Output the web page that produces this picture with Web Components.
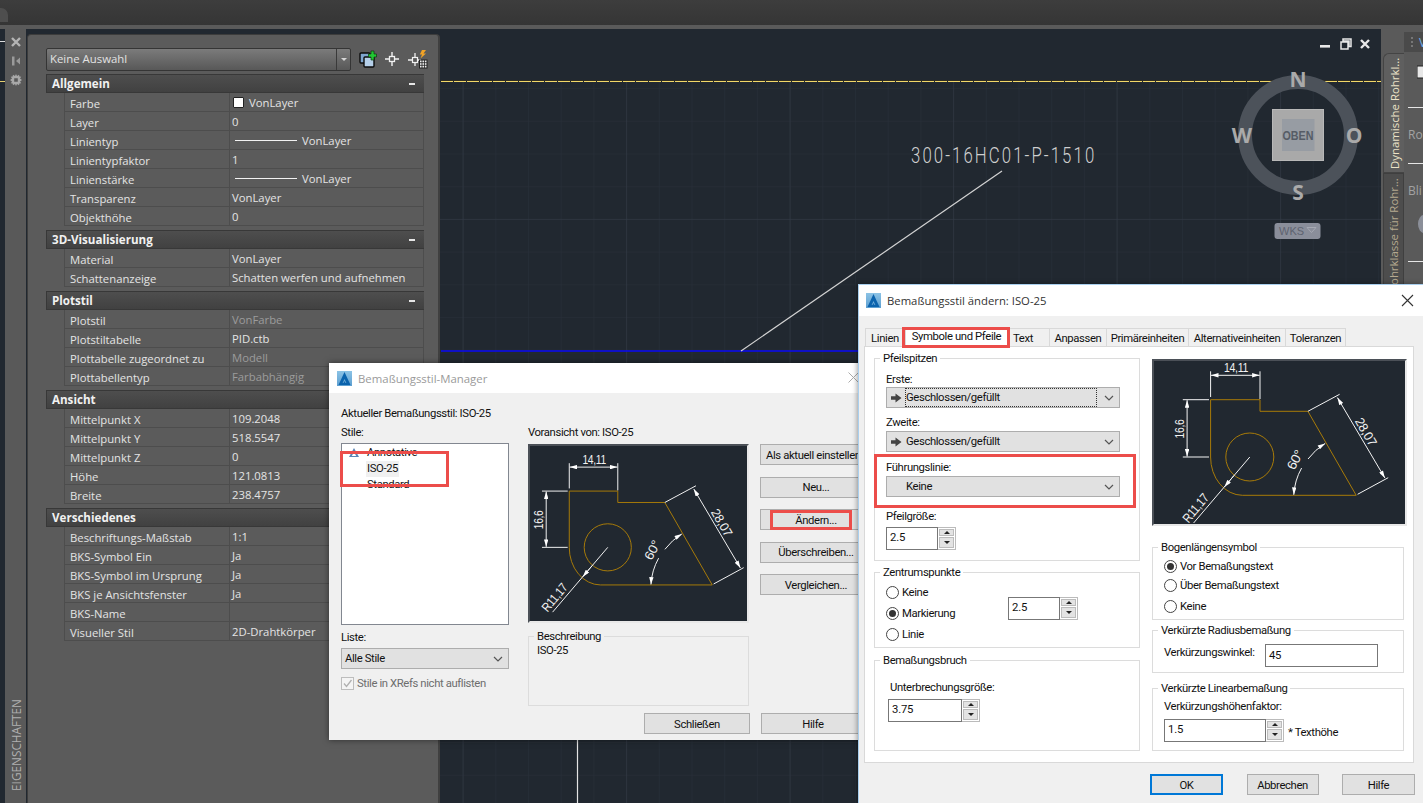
<!DOCTYPE html>
<html lang="de"><head><meta charset="utf-8"><title>Bemaßungsstil</title>
<style>html,body{margin:0;height:100%;overflow:hidden;background:#212830}</style></head>
<body>
<cad-app>
  <dock-strip slot="strip"></dock-strip>
  <prop-palette slot="palette">
    <prop-cat label="Allgemein"></prop-cat>
    <prop-row label="Farbe" value="VonLayer" swatch></prop-row>
    <prop-row label="Layer" value="0"></prop-row>
    <prop-row label="Linientyp" value="VonLayer" line></prop-row>
    <prop-row label="Linientypfaktor" value="1"></prop-row>
    <prop-row label="Linienstärke" value="VonLayer" line></prop-row>
    <prop-row label="Transparenz" value="VonLayer"></prop-row>
    <prop-row label="Objekthöhe" value="0"></prop-row>
    <prop-cat label="3D-Visualisierung"></prop-cat>
    <prop-row label="Material" value="VonLayer"></prop-row>
    <prop-row label="Schattenanzeige" value="Schatten werfen und aufnehmen"></prop-row>
    <prop-cat label="Plotstil"></prop-cat>
    <prop-row label="Plotstil" value="VonFarbe" dim></prop-row>
    <prop-row label="Plotstiltabelle" value="PID.ctb"></prop-row>
    <prop-row label="Plottabelle zugeordnet zu" value="Modell" dim></prop-row>
    <prop-row label="Plottabellentyp" value="Farbabhängig" dim></prop-row>
    <prop-cat label="Ansicht"></prop-cat>
    <prop-row label="Mittelpunkt X" value="109.2048"></prop-row>
    <prop-row label="Mittelpunkt Y" value="518.5547"></prop-row>
    <prop-row label="Mittelpunkt Z" value="0"></prop-row>
    <prop-row label="Höhe" value="121.0813"></prop-row>
    <prop-row label="Breite" value="238.4757"></prop-row>
    <prop-cat label="Verschiedenes"></prop-cat>
    <prop-row label="Beschriftungs-Maßstab" value="1:1"></prop-row>
    <prop-row label="BKS-Symbol Ein" value="Ja"></prop-row>
    <prop-row label="BKS-Symbol im Ursprung" value="Ja"></prop-row>
    <prop-row label="BKS je Ansichtsfenster" value="Ja"></prop-row>
    <prop-row label="BKS-Name" value=""></prop-row>
    <prop-row label="Visueller Stil" value="2D-Drahtkörper"></prop-row>
  </prop-palette>
  <cad-viewport slot="viewport"></cad-viewport>
  <right-dock slot="right"></right-dock>
  <style-manager slot="windows"></style-manager>
  <style-editor slot="windows"></style-editor>
</cad-app>
<script>
function def(name, css, html, init){
  customElements.define(name, class extends HTMLElement{
    constructor(){super();
      const r=this.attachShadow({mode:'open'});
      const a=n=>this.getAttribute(n);
      r.innerHTML='<style>'+css+'</style>'+(typeof html==='function'?html(a,this):html);
      if(init)init(r,this);
    }
  });
}
const UI='"Open Sans","Noto Sans",sans-serif';
const WIN='Roboto,"Liberation Sans",Arial,sans-serif';
const ACAD='<svg width="15" height="15" viewBox="0 0 15 15"><defs><linearGradient id="g" x1="0" y1="0" x2="0" y2="1"><stop offset="0" stop-color="#8cc3e6"/><stop offset="1" stop-color="#5d9fd0"/></linearGradient></defs><rect width="15" height="15" fill="url(#g)"/><path d="M7.5 1 L13.5 14 H1.5 Z M7.5 8 L5.6 12 H9.4 Z" fill="#0b63ad" fill-rule="evenodd"/><path d="M5.5 14 L7.5 10 L9.5 14Z" fill="#0b63ad"/></svg>';

/* shell */
def('cad-app',`
:host{display:grid;grid-template-rows:25px 4px 774px;width:1423px;height:803px;position:relative;overflow:hidden}
.top{background:linear-gradient(#3d3d3d,#353535);position:relative}
.top i{display:block;width:8px;height:14px;margin-top:8px;background:#4e4e4e;border-radius:0 7px 0 0;position:absolute;left:0;top:0}
.sep{background:#5a5a5a}
.work{display:flex;min-height:0;background:#212830}
.gut{width:5px;flex:none}
.gut b{display:block;height:1px;background:#ddd;margin-top:12px}
.gut u{display:block;height:1px;background:#e6cf70;margin-top:39px}
`,`<div class="top"><i></i></div><div class="sep"></div>
<div class="work"><div class="gut"><b></b><u></u></div><slot name="strip"></slot><slot name="palette"></slot><slot name="viewport"></slot><slot name="right"></slot></div>
<slot name="windows"></slot>`);

def('dock-strip',`
:host{display:flex;flex-direction:column;align-items:center;width:21px;flex:none;background:#595959;box-sizing:border-box;padding-top:7px;font:11.8px ${UI};color:#b0b0b0;height:774px}
svg{display:block;margin-bottom:7px}
.t{margin-top:auto;margin-bottom:12px;writing-mode:vertical-rl;transform:rotate(180deg);line-height:14px}
`,`<svg width="12" height="12" viewBox="0 0 12 12"><path d="M2 2 L10 10 M10 2 L2 10" stroke="#b4b4b4" stroke-width="2.4"/></svg>
<svg width="12" height="12" viewBox="0 0 12 12"><rect x="2" y="1.5" width="2.5" height="9" fill="#9a9a9a"/><path d="M10 2.5 V9.5 L6 6Z" fill="#9a9a9a"/></svg>
<svg width="12" height="12" viewBox="0 0 12 12"><path d="M6 0 L7 2 L9 .8 L9.4 2.6 L11.2 2.8 L10 4.6 L12 6 L10 7.4 L11.2 9.2 L9.4 9.4 L9 11.2 L7 10 L6 12 L5 10 L3 11.2 L2.6 9.4 L.8 9.2 L2 7.4 L0 6 L2 4.6 L.8 2.8 L2.6 2.6 L3 .8 L5 2Z M4.2 4.2 V7.8 H7.8 V4.2Z" fill="#a8a8a8" fill-rule="evenodd"/></svg>
<div class="t">EIGENSCHAFTEN</div>`);

/* properties palette */
def('prop-palette',`
:host{display:block;width:414px;flex:none;box-sizing:border-box;height:774px;background:#212830;font:11.4px ${UI}}
.p{box-sizing:border-box;height:100%;margin:5px 0 0 1px;background:#5b5b5b;border:1px solid #3c3c3c;border-bottom:0;border-right:2px solid #404040;border-radius:4px 4px 0 0;padding:13px 14px 0 18px}
.head{display:flex;align-items:center;height:23px;margin-bottom:3px;width:393px}
.combo{width:305px;height:23px;box-sizing:border-box;display:flex;border:1px solid #353535;border-radius:2px;background:linear-gradient(#7b7b7b,#585858);color:#e2e2e2}
.combo span{flex:1;padding-left:3px;line-height:20px}
.combo em{width:13px;border-left:1px solid #3a3a3a;display:flex;align-items:center;justify-content:center}
.combo em::after{content:"";border:3.5px solid transparent;border-top:3.5px solid #d6d6d6;margin-top:3px}
.ic{display:flex;margin-left:8px;gap:5px}
.ic svg{display:block}
.list{width:378px}
`,`<div class="p"><div class="head"><div class="combo"><span>Keine Auswahl</span><em></em></div>
<div class="ic">
<svg width="18" height="18" viewBox="0 0 18 18"><rect x="1" y="3" width="10" height="10" rx="1" fill="#7fa6cf" stroke="#0b0b0b" stroke-width="1.4"/><rect x="5" y="7" width="10" height="10" rx="1" fill="#b5cfe9" stroke="#0b0b0b" stroke-width="1.4"/><path d="M9.5 4 H12 V1 H15 V4 H17.5 V7 H15 V10 H12 V7 H9.5Z" fill="#22c634" stroke="#0c3b10" stroke-width=".7"/></svg>
<svg width="20" height="18" viewBox="0 0 20 18"><path d="M10 2 V6.5 M10 11.5 V16 M3 9 H7.5 M12.5 9 H17" stroke="#f2f2f2" stroke-width="1.4"/><rect x="7.5" y="6.5" width="5" height="5" fill="none" stroke="#f2f2f2" stroke-width="1.3"/></svg>
<svg width="22" height="20" style="margin-top:-1px" viewBox="0 0 22 20"><path d="M8 4 V8.5 M8 13 V17 M1 11 H5.5 M10.5 11 H14" stroke="#f2f2f2" stroke-width="1.3"/><rect x="5.5" y="8.5" width="5" height="5" fill="none" stroke="#f2f2f2" stroke-width="1.2"/><path d="M15 1 L19 1 L16.5 4.5 H19 L13.5 9.5 L15 5.5 H12.8Z" fill="#f1a326"/><rect x="12.5" y="11" width="7.5" height="8" fill="#efefef" stroke="#222"/><path d="M12.5 13.7 H20 M12.5 16.3 H20 M15 11 V19 M17.5 11 V19" stroke="#222" stroke-width=".8"/></svg>
</div></div><div class="list"><slot></slot></div></div>`);

def('prop-cat',`
:host{display:flex;justify-content:space-between;align-items:center;box-sizing:border-box;height:19px;margin-top:4px;background:linear-gradient(#4e4e4e,#414141);border:1px solid #383838;border-width:1px 0 1px 1px;padding:0 9px 0 5px;font:700 11.6px ${UI};color:#f1f1f1}
:host(:first-child){margin-top:0}
i{display:block;width:6px;height:2px;background:#e6e6e6}
`,a=>`<span>${a('label')}</span><i></i>`);

def('prop-row',`
:host{display:grid;grid-template-columns:164px 1fr;height:19px;margin-left:18px;box-sizing:border-box;border-bottom:1px solid #4d4d4d;border-left:1px solid #4d4d4d;border-right:1px solid #4d4d4d;font:11.3px/18px ${UI};color:#e4e4e4}
.l{padding-left:5px;white-space:nowrap;overflow:hidden;line-height:21px;height:18px}
.v{border-left:1px solid #4d4d4d;padding:1px 0 0 2px;box-sizing:border-box;display:flex;align-items:center;white-space:nowrap;overflow:hidden;height:18px}
:host([dim]) .v{color:#9c9c9c}
.sw{width:9px;height:9px;background:#fff;border:1px solid #222;border-radius:1px;margin:-1px 5px 0 1px}
.ln{width:62px;height:1px;background:#f2f2f2;margin:-1px 5px 0 3px}
`,(a,e)=>`<div class="l">${a('label')}</div><div class="v">${e.hasAttribute('swatch')?'<i class="sw"></i>':''}${e.hasAttribute('line')?'<i class="ln"></i>':''}<span>${a('value')}</span></div>`);

/* drawing area */
def('cad-viewport',`
:host{display:block;flex:1;min-width:0;height:774px;background:#212830}
svg{display:block}
`,`<svg width="941" height="774" viewBox="440 29 941 774" font-family='"Liberation Sans",Arial,sans-serif'>
<defs>
<pattern id="minor" x="462.6" y="55.4" width="32.7" height="32.7" patternUnits="userSpaceOnUse"><path d="M0 0 V32.7 M0 0 H32.7" stroke="#29303a" stroke-width="1"/></pattern>
<pattern id="major" x="462.6" y="55.4" width="163.5" height="163.5" patternUnits="userSpaceOnUse"><path d="M0 0 V163.5 M0 0 H163.5" stroke="#343c47" stroke-width="1"/></pattern>
</defs>
<rect x="440" y="81" width="941" height="722" fill="url(#minor)"/>
<rect x="440" y="81" width="941" height="722" fill="url(#major)"/>
<path d="M441 80.5 H1381" stroke="#2f2d22" stroke-width="1"/>
<path d="M441 81.5 H1381" stroke="#f2d868" stroke-width="1" stroke-dasharray="12 1"/>
<path d="M441 351 H880" stroke="#0808f8" stroke-width="1.6"/>
<path d="M741 351 L1002 171" stroke="#d4d4d4" stroke-width="1.2"/>
<path d="M577.5 740 V803" stroke="#e4e4e4" stroke-width="1.2"/>
<text transform="translate(911 162.5) scale(.8 1.08)" textLength="229" lengthAdjust="spacing" font-size="21" font-family='Roboto,sans-serif' font-weight="300" fill="#cfcfcf">300-16HC01-P-1510</text>
<g fill="#e8e8e8">
<rect x="1320" y="45" width="10" height="2.6"/>
<path d="M1341 42 H1348 V49 H1341Z M1343 39 H1351 V46.5 H1349 V41 H1343Z" fill="none" stroke="#e8e8e8" stroke-width="1.5"/>
<path d="M1361 40 L1369 48 M1369 40 L1361 48" stroke="#e8e8e8" stroke-width="2.4"/>
</g>
<circle cx="1298" cy="135" r="53" fill="none" stroke="#4c525a" stroke-width="14"/>
<rect x="1272.5" y="109.5" width="51" height="51" fill="#a9a9a9" stroke="#b8b8b8"/>
<rect x="1282" y="119" width="32.5" height="32" fill="#979ca3"/>
<text x="1298" y="140" text-anchor="middle" font-size="13.5" font-weight="700" textLength="31" lengthAdjust="spacingAndGlyphs" fill="#565c66">OBEN</text>
<g font-size="21" font-weight="700" fill="#aaaaaa" text-anchor="middle" font-family='"Open Sans",sans-serif'>
<text x="1298" y="87">N</text><text x="1298" y="200">S</text><text x="1242" y="142.5">W</text><text x="1354" y="142.5">O</text></g>
<rect x="1274.5" y="223" width="46" height="16" rx="3" fill="#8a8e9a"/>
<text x="1279" y="235" font-size="11" fill="#5e6370">WKS</text>
<path d="M1307 227.5 H1316 L1311.5 232.5Z" fill="none" stroke="#a6a9b3"/>
</svg>`);

def('right-dock',`
:host{display:block;width:42px;flex:none;height:774px;background:#5a5a5a;position:relative;font:12px ${UI};overflow:hidden}
.tabs{position:absolute;left:2px;top:24px;width:21px}
.tab{box-sizing:border-box;width:21px;writing-mode:vertical-rl;transform:rotate(180deg);display:flex;align-items:center;white-space:nowrap;overflow:hidden;line-height:19px;font-size:11.4px}
.a{height:120px;padding-top:3px;background:#5f5f5f;border:1px solid #444;border-left:0;border-bottom-right-radius:6px;color:#ece3c8}
.b{height:125px;padding-top:5px;background:#4d4d4d;border:1px solid #3f3f3f;color:#b5a990}
.c{position:absolute;left:23px;top:0;right:0;bottom:0;color:#a2a2a2}
.h{height:20px;margin-top:3px;background:#4a4a4a;display:flex;align-items:center;color:#6fb0e8;padding-left:7px;gap:6px}
.h u{width:2px;height:10px;border-left:2px dotted #777}
.c hr{position:absolute;left:4px;right:0;border:0;height:1px;background:#e6e6e6;margin:0}
.c span{position:absolute;left:4px}
`,`<div class="tabs"><div class="tab a">Dynamische Rohrkl...</div><div class="tab b">Rohrklasse für Rohr...</div></div>
<div class="c"><div class="h"><u></u>V</div>
<svg style="position:absolute;left:13px;top:36px" width="8" height="16"><rect x="0" y="1" width="10" height="12" fill="#e8e8e8" stroke="#222"/></svg>
<hr style="top:78px"><span style="top:97px">Ro</span><hr style="top:134px"><span style="top:153px">Bli</span>
<svg style="position:absolute;left:12px;top:186px" width="8" height="18"><ellipse cx="8" cy="9" rx="6" ry="9" fill="#8b8f99"/></svg>
<hr style="top:232px"></div>`);

/* windows primitives */
def('win-btn',`
:host{display:flex;align-items:center;justify-content:center;box-sizing:border-box;height:21px;background:#e1e1e1;border:1px solid #adadad;padding-top:1px;font:11.3px ${WIN};letter-spacing:-.38px;color:#111;white-space:nowrap}
:host([primary]){border:2px solid #0078d7}
`,'<slot></slot>');
def('win-combo',`
:host{display:flex;align-items:center;box-sizing:border-box;height:21px;background:#e1e1e1;border:1px solid #adadad;font:11.3px/16px ${WIN};letter-spacing:-.38px;color:#111;padding-left:3px;position:relative}
.a{display:block}
.t{flex:1;white-space:nowrap;padding-top:1px}
:host([focus]) .t{outline:1px dotted #333;outline-offset:0;margin-right:8px}
svg.c{flex:none;margin-right:5px}
`,(a,e)=>`${e.hasAttribute('arrow')?'<svg class="a" width="11" height="10" viewBox="0 0 11 10" style="margin:0 4px 0 1px"><path d="M0 3.2 H4.5 V.5 L10.5 5 L4.5 9.5 V6.8 H0Z" fill="#444"/></svg>':''}<span class="t"><slot></slot></span><svg class="c" width="10" height="6" viewBox="0 0 10 6"><path d="M1 1 L5 5 L9 1" fill="none" stroke="#555" stroke-width="1.2"/></svg>`);
def('win-group',`
:host{display:block;font:11.3px ${WIN};letter-spacing:-.38px;color:#111}
fieldset{box-sizing:border-box;height:100%;margin:0;padding:0;border:1px solid #dcdcdc;min-inline-size:0}
legend{padding:0 3px;margin-left:5px;line-height:15px;height:14px;white-space:nowrap}
`,a=>`<fieldset><legend>${a('label')}</legend><slot></slot></fieldset>`);
def('win-radio',`
:host{display:flex;align-items:center;height:14px;gap:3px;font:11.3px/16px ${WIN};letter-spacing:-.38px;color:#111;white-space:nowrap}
i{display:flex;align-items:center;justify-content:center;width:13px;height:13px;box-sizing:border-box;border:1px solid #444;border-radius:50%;background:#fff}
:host([checked]) i::after{content:"";width:7px;height:7px;border-radius:50%;background:#333}
`,'<i></i><span style="padding-top:1px"><slot></slot></span>');
def('win-spin',`
:host{display:flex;height:23px;font:11.3px ${WIN};letter-spacing:-.2px;color:#111}
.i{flex:1;box-sizing:border-box;border:1px solid #777;background:#fff;padding:2px 0 0 3px;line-height:16px}
.s{width:18px;flex:none;display:flex;flex-direction:column;gap:1px;box-sizing:border-box;border:1px solid #bbb;border-left:0;background:#fff;padding:1px}
.s b{flex:1;background:#e3e3e3;border:1px solid #bcbcbc;display:flex;align-items:center;justify-content:center}
.s b::after{content:"";border:3px solid transparent}
.s b:first-child::after{border-bottom:3.5px solid #222;margin-top:-3px}
.s b:last-child::after{border-top:3.5px solid #222;margin-top:3px}
`,a=>`<div class="i">${a('value')}</div><div class="s"><b></b><b></b></div>`);
def('win-edit',`
:host{display:block;box-sizing:border-box;height:23px;border:1px solid #777;background:#fff;font:11.3px/18px ${WIN};color:#111;padding:2px 0 0 3px}
`,'<slot></slot>');
def('red-box',`:host{display:block;position:absolute;z-index:5;box-sizing:border-box;border:3px solid #ec4d4a;pointer-events:none}`,'');

/* dimension preview drawing */
def('dim-preview',`
:host{display:block;background:#212830;border:2px solid #4b5057;border-right-color:#e8e8e8;border-bottom-color:#e8e8e8;box-sizing:border-box}
svg{display:block}
`,(a)=>{const ox=a('ox'),oy=a('oy');return `<svg width="100%" height="100%" viewBox="${ox} ${oy} ${a('vw')} ${a('vh')}" font-family='"Liberation Sans",Arial,sans-serif' font-size="13" fill="#f2f2f2">
<defs><marker id="ar" viewBox="0 0 10 6" refX="10" refY="3" markerWidth="8" markerHeight="4.5" markerUnits="userSpaceOnUse" orient="auto-start-reverse"><path d="M10 3 L0 0 V6Z" fill="#fff"/></marker></defs>
<g fill="none" stroke="#a87b08" stroke-width="1"><path d="M56.6 38.7 H106 V50.3 H153.9 L202.2 134.3 H88.3 A32 38 0 0 1 56.6 96 Z"/><circle cx="95.8" cy="96" r="24"/></g>
<g fill="none" stroke="#f4f4f4" stroke-width="1">
<path d="M56.6 36 V10.3 M106 38 V10.3"/><path d="M57 14.3 H105.6" marker-start="url(#ar)" marker-end="url(#ar)"/>
<path d="M55 38.7 H28.8 M55 96 H28.8"/><path d="M33.1 39.2 V95.5" marker-start="url(#ar)" marker-end="url(#ar)"/>
<path d="M153.9 50.3 L185.6 33.3 M203.6 133.3 L234.2 116.7"/><path d="M183.4 36.6 L230.9 117" marker-start="url(#ar)" marker-end="url(#ar)"/>
<path d="M139.8 133.8 A62 62 0 0 1 147.6 107" marker-start="url(#ar)"/><path d="M154 98 A62 62 0 0 1 171.2 82.4" marker-end="url(#ar)"/>
<path d="M95.8 96 L39.6 162"/><path d="M80 114.5 L70.3 126" marker-end="url(#ar)"/>
</g>
<text x="82" y="11" text-anchor="middle" textLength="24" lengthAdjust="spacingAndGlyphs">14,11</text>
<text transform="translate(30 68) rotate(-90)" text-anchor="middle" textLength="19" lengthAdjust="spacingAndGlyphs">16,6</text>
<text transform="translate(208 73) rotate(60)" text-anchor="middle" textLength="30" lengthAdjust="spacingAndGlyphs">28,07</text>
<text transform="translate(145 101) rotate(-62)" text-anchor="middle" textLength="20" lengthAdjust="spacingAndGlyphs">60°</text>
<text transform="translate(45 150) rotate(-50)" text-anchor="middle" textLength="33" lengthAdjust="spacingAndGlyphs">R11,17</text>
</svg>`});

/* window 1 */
def('style-manager',`
:host{display:block;position:absolute;left:329px;top:363px;width:546px;height:377px;background:#f0f0f0;box-shadow:0 0 6px rgba(0,0,0,.5);font:11.3px ${WIN};letter-spacing:-.38px;color:#111;overflow:hidden}
.title{height:30px;background:#fff;display:flex;align-items:center;padding-left:8px;gap:6px;font:11.4px ${UI};letter-spacing:0;color:#9a9a9a}
.title svg{flex:none}
.x{position:absolute;left:519px;top:9px}
.body{padding:13px 0 0 12px}
.cur,.lab{height:14px;line-height:16px;white-space:nowrap}
.cols{display:grid;grid-template-columns:168px 221px 104px;column-gap:19px;margin-top:5px}
.cols>:nth-child(3){margin-left:-8px}
.list{height:182px;box-sizing:border-box;border:1px solid #828790;background:#fff;margin-top:4px;padding-top:1px}
.it{display:flex;height:16px;line-height:16px;padding-left:24px;position:relative}
.it span{padding:0 1px}
.sel span{background:#f0f0f0}
.it svg{position:absolute;left:6px;top:2px}
.chk{display:flex;align-items:center;gap:3px;margin-top:8px;color:#6d6d6d;white-space:nowrap;height:13px}
.chk i{display:flex;width:13px;height:13px;box-sizing:border-box;border:1px solid #bdbdbd;background:#f4f4f4}
dim-preview{height:179px;margin-top:5px;width:221px}
.btns{display:flex;flex-direction:column;gap:11.5px;padding-top:19px}
.foot{display:flex;gap:11px;margin:7px 0 0 303px}
.desc{display:block;height:77px;margin-top:6px}
.desc div{padding-left:8px;line-height:15px}
`,`<div class="title">${ACAD}<span>Bemaßungsstil-Manager</span></div>
<svg class="x" width="11" height="11" viewBox="0 0 11 11"><path d="M.5 .5 L10.5 10.5 M10.5 .5 L.5 10.5" stroke="#aaa"/></svg>
<div class="body">
<div class="cur">Aktueller Bemaßungsstil: ISO-25</div>
<div class="cols">
 <div>
  <div class="lab">Stile:</div>
  <div class="list">
   <div class="it"><svg width="12" height="11" viewBox="0 0 12 11"><path d="M6 1 L11 10 H1Z M6 5 L3.8 9 H8.2Z" fill="#5b86b5" fill-rule="evenodd"/></svg><span>Annotative</span></div>
   <div class="it sel"><span>ISO-25</span></div>
   <div class="it"><span>Standard</span></div>
  </div>
  <div class="lab" style="margin-top:5px">Liste:</div>
  <win-combo style="margin-top:4px;width:168px;display:flex">Alle Stile</win-combo>
  <div class="chk"><i><svg width="11" height="11" viewBox="0 0 11 11"><path d="M2 5.5 L4.5 8.5 L9.5 2" fill="none" stroke="#b0b0b0" stroke-width="1.3"/></svg></i>Stile in XRefs nicht auflisten</div>
 </div>
 <div>
  <div class="lab">Voransicht von: ISO-25</div>
  <dim-preview ox="16.6" oy="-5.6" vw="221" vh="175"></dim-preview>
  <win-group class="desc" label="Beschreibung"><div>ISO-25</div></win-group>
 </div>
 <div class="btns"><win-btn style="justify-content:flex-start;padding-left:5px">Als aktuell einstellen</win-btn><win-btn>Neu...</win-btn><win-btn>Ändern...</win-btn><win-btn>Überschreiben...</win-btn><win-btn>Vergleichen...</win-btn></div>
</div>
<div class="foot"><win-btn style="width:106px">Schließen</win-btn><win-btn style="width:104px">Hilfe</win-btn></div>
</div>
<red-box style="left:11px;top:88px;width:109px;height:36px"></red-box>
<red-box style="left:441px;top:147px;width:82px;height:19.5px"></red-box>`);

/* window 2 */
def('style-editor',`
:host{display:block;position:absolute;left:858px;top:284px;width:565px;height:519px;box-sizing:border-box;background:#f0f0f0;border:1px solid #a9cfee;border-bottom:0;border-right:0;font:11.3px ${WIN};letter-spacing:-.38px;color:#111;box-shadow:-1px 0 5px rgba(0,0,0,.35)}
.title{height:31px;background:#fff;display:flex;align-items:center;padding-left:7px;gap:6px;font:11.3px ${UI};letter-spacing:0;color:#333}
.x{position:absolute;left:542px;top:9px}
.tabs{display:flex;margin:12px 0 0 6px;height:18px;align-items:flex-end}
.tab{height:18px;box-sizing:border-box;border:1px solid #d9d9d9;border-left:0;border-bottom:0;background:#f0f0f0;display:flex;align-items:center;justify-content:center;white-space:nowrap;padding-top:1px}
.tab.on{height:20px;background:#fff;border:1px solid #d9d9d9;border-bottom:0;padding:0 0 3px;position:relative;z-index:1;margin-bottom:-1px}
.pane{box-sizing:border-box;margin-left:5px;width:550px;height:417px;background:#fff;border:1px solid #d9d9d9;padding:4px 0 0 9px;display:grid;grid-template-columns:266px 256px;column-gap:12px}
.col{display:flex;flex-direction:column;min-width:0}
.lab{height:14px;line-height:16px;white-space:nowrap}
win-combo{width:234px}
.in{padding-left:11px}
.rad{display:flex;flex-direction:column;gap:7px}
.foot{display:flex;gap:23.5px;margin:11px 0 0 291px}
.foot win-btn{height:21px}
.g2{width:252px}
`,`<div class="title">${ACAD}<span>Bemaßungsstil ändern: ISO-25</span></div>
<svg class="x" width="13" height="13" viewBox="0 0 13 13"><path d="M1 1 L12 12 M12 1 L1 12" stroke="#333" stroke-width="1.1"/></svg>
<div class="tabs">
 <div class="tab" style="width:40px;border-left:1px solid #d9d9d9">Linien</div>
 <div class="tab on" style="width:103px">Symbole und Pfeile</div>
 <div class="tab" style="width:42px;justify-content:flex-start;padding-left:5px">Text</div>
 <div class="tab" style="width:57px">Anpassen</div>
 <div class="tab" style="width:82px">Primäreinheiten</div>
 <div class="tab" style="width:97px">Alternativeinheiten</div>
 <div class="tab" style="width:60px">Toleranzen</div>
</div>
<div class="pane">
 <div class="col">
  <win-group label="Pfeilspitzen" style="height:210px"><div class="in">
   <div class="lab" style="margin-top:7px">Erste:</div>
   <win-combo arrow focus style="margin-top:1px">Geschlossen/gefüllt</win-combo>
   <div class="lab" style="margin-top:7px">Zweite:</div>
   <win-combo arrow style="margin-top:2px">Geschlossen/gefüllt</win-combo>
   <div class="lab" style="margin-top:8px">Führungslinie:</div>
   <win-combo style="margin-top:2px;padding-left:19px">Keine</win-combo>
   <div class="lab" style="margin-top:12px">Pfeilgröße:</div>
   <win-spin value="2.5" style="margin-top:4px;width:70px"></win-spin>
  </div></win-group>
  <win-group label="Zentrumspunkte" style="height:83px;margin-top:4px"><div class="in" style="display:flex">
   <div class="rad" style="width:122px;margin-top:6px"><win-radio>Keine</win-radio><win-radio checked>Markierung</win-radio><win-radio>Linie</win-radio></div>
   <win-spin value="2.5" style="margin-top:18px;width:70px"></win-spin>
  </div></win-group>
  <win-group label="Bemaßungsbruch" style="height:98px;margin-top:5px"><div style="padding-left:13px">
   <div class="lab" style="margin:13px 0 0 2px">Unterbrechungsgröße:</div>
   <win-spin value="3.75" style="margin-top:5px;width:92px"></win-spin>
  </div></win-group>
 </div>
 <div class="col">
  <dim-preview ox="0" oy="0" vw="251" vh="163" style="width:255px;height:167px;margin-top:8px"></dim-preview>
  <win-group class="g2" label="Bogenlängensymbol" style="height:80px;margin-top:14px"><div class="rad" style="padding:5px 0 0 11px;gap:5px">
   <win-radio checked>Vor Bemaßungstext</win-radio><win-radio>Über Bemaßungstext</win-radio><win-radio style="margin-top:2px">Keine</win-radio>
  </div></win-group>
  <win-group class="g2" label="Verkürzte Radiusbemaßung" style="height:50px;margin-top:3px"><div style="display:flex;padding:7px 0 0 11px">
   <div class="lab" style="width:101px;margin-top:1px">Verkürzungswinkel:</div><win-edit style="width:113px">45</win-edit>
  </div></win-group>
  <win-group class="g2" label="Verkürzte Linearbemaßung" style="height:70px;margin-top:8px"><div style="padding:4px 0 0 11px">
   <div class="lab">Verkürzungshöhenfaktor:</div>
   <div style="display:flex;margin-top:6px;align-items:center"><win-spin value="1.5" style="width:120px"></win-spin><span style="margin-left:4px;padding-top:3px">* Texthöhe</span></div>
  </div></win-group>
 </div>
</div>
<div class="foot"><win-btn primary style="width:73px">OK</win-btn><win-btn style="width:72px">Abbrechen</win-btn><win-btn style="width:73px">Hilfe</win-btn></div>
<red-box style="left:43px;top:42px;width:108px;height:21px"></red-box>
<red-box style="left:15px;top:169px;width:262px;height:54px"></red-box>`);
</script>
</body></html>
